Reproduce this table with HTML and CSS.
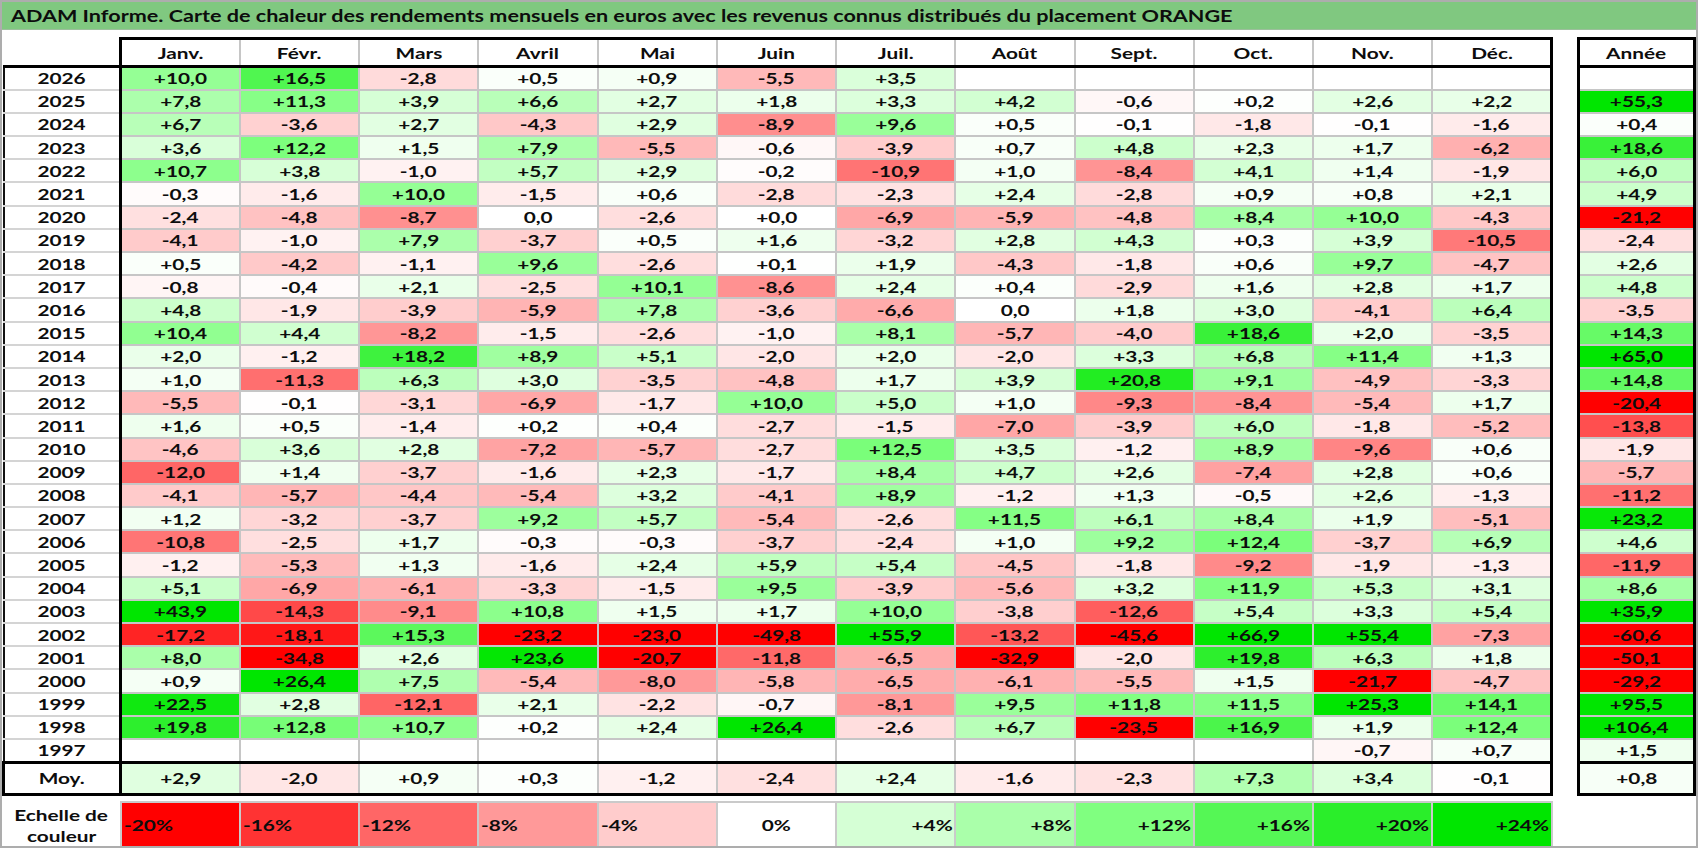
FILE: index.html
```html
<!DOCTYPE html>
<html lang="fr">
<head>
<meta charset="utf-8">
<title>ADAM Informe - Carte de chaleur ORANGE</title>
<link rel="stylesheet" href="styles.css">
</head>
<body>
<div class="page">
  <header class="title"><span class="sx-title">ADAM Informe. Carte de chaleur des rendements mensuels en euros avec les revenus connus distribués du placement ORANGE</span></header>
  <div class="sheet">
    <table class="grid" id="grid"></table>
    <table class="totals" id="totals"></table>
  </div>
</div>
<script src="script.js"></script>
</body>
</html>
```

FILE: styles.css
```css
* { box-sizing: border-box; }
html, body { margin: 0; padding: 0; background: #fff; }
body {
  font-family: Lato, "Open Sans", "Liberation Sans", sans-serif;
  font-weight: 700;
  color: #0d0d0d;
}
.page {
  width: 1698px;
  height: 848px;
  border: 2px solid #adadad;
  overflow: hidden;
}
.title {
  height: 28px;
  background: #80c880;
  border-bottom: 1px solid #9cbf9c;
  display: flex;
  align-items: center;
  padding-left: 9px;
  font-size: 17px;
  white-space: nowrap;
}
.sx-title { display: inline-block; transform: scaleX(1.27); transform-origin: left center; }
.sx { display: inline-block; transform: scaleX(1.3); }
.sx-left { transform-origin: left center; }
.sx-right { transform-origin: right center; }

.sheet {
  display: flex;
  justify-content: space-between;
  align-items: flex-start;
  margin-top: 7px;
}
table { border-collapse: collapse; table-layout: fixed; }
.grid { width: 1548px; }
.totals { width: 119px; }
col.c-year { width: 117px; }
col.c-m { width: 119.25px; }

th, td {
  padding: 0;
  text-align: center;
  font-size: 16px;
  font-weight: 700;
  white-space: nowrap;
  line-height: 18px;
}

/* header */
.hdr th {
  height: 28px;
  border-top: 3px solid #000;
  border-bottom: 3px solid #000;
  border-left: 2px solid #c6c6c6;
  border-right: 2px solid #c6c6c6;
}
.hdr th.corner { border-top: none; border-left: none; border-right: 3px solid #000; }
.hdr th:last-child { border-right: 3px solid #000; }
.totals .hdr th { border-left: 3px solid #000; border-right: 3px solid #000; }

/* year rows */
.yr td, .yr th { height: 23.2px; }
td.v { border: 2px solid #c6c6c6; }
th.lab {
  border-left: 2px solid #111;
  border-right: 3px solid #000;
  border-top: 2px solid #d4d4d4;
  border-bottom: 2px solid #d4d4d4;
}
.yr td:last-child, .avg td:last-child { border-right: 3px solid #000; }
.totals td.v { border-left: 3px solid #000; border-right: 3px solid #000; }

/* average row */
.avg td, .avg th { height: 32px; border-top: 3px solid #000; border-bottom: 3px solid #000; }
.avg th.lab { border-left: 3px solid #000; }

/* spacer + colour scale */
.gap td { height: 8px; border: none; }
.scale td, .scale th { height: 45px; }
.scale td { border: 2px solid #cacaca; }
.scale th.lab2 { border: none; line-height: 21px; }
.scale td.neg { text-align: left; padding-left: 2px; }
.scale td.pos { text-align: right; padding-right: 2px; }
```

FILE: script.js
```js
(function () {
  var months = ['Janv.', 'Févr.', 'Mars', 'Avril', 'Mai', 'Juin', 'Juil.', 'Août', 'Sept.', 'Oct.', 'Nov.', 'Déc.'];
  var data = [
    ['2026', '+10,0 +16,5 -2,8 +0,5 +0,9 -5,5 +3,5 . . . . .', '.'],
    ['2025', '+7,8 +11,3 +3,9 +6,6 +2,7 +1,8 +3,3 +4,2 -0,6 +0,2 +2,6 +2,2', '+55,3'],
    ['2024', '+6,7 -3,6 +2,7 -4,3 +2,9 -8,9 +9,6 +0,5 -0,1 -1,8 -0,1 -1,6', '+0,4'],
    ['2023', '+3,6 +12,2 +1,5 +7,9 -5,5 -0,6 -3,9 +0,7 +4,8 +2,3 +1,7 -6,2', '+18,6'],
    ['2022', '+10,7 +3,8 -1,0 +5,7 +2,9 -0,2 -10,9 +1,0 -8,4 +4,1 +1,4 -1,9', '+6,0'],
    ['2021', '-0,3 -1,6 +10,0 -1,5 +0,6 -2,8 -2,3 +2,4 -2,8 +0,9 +0,8 +2,1', '+4,9'],
    ['2020', '-2,4 -4,8 -8,7 0,0 -2,6 +0,0 -6,9 -5,9 -4,8 +8,4 +10,0 -4,3', '-21,2'],
    ['2019', '-4,1 -1,0 +7,9 -3,7 +0,5 +1,6 -3,2 +2,8 +4,3 +0,3 +3,9 -10,5', '-2,4'],
    ['2018', '+0,5 -4,2 -1,1 +9,6 -2,6 +0,1 +1,9 -4,3 -1,8 +0,6 +9,7 -4,7', '+2,6'],
    ['2017', '-0,8 -0,4 +2,1 -2,5 +10,1 -8,6 +2,4 +0,4 -2,9 +1,6 +2,8 +1,7', '+4,8'],
    ['2016', '+4,8 -1,9 -3,9 -5,9 +7,8 -3,6 -6,6 0,0 +1,8 +3,0 -4,1 +6,4', '-3,5'],
    ['2015', '+10,4 +4,4 -8,2 -1,5 -2,6 -1,0 +8,1 -5,7 -4,0 +18,6 +2,0 -3,5', '+14,3'],
    ['2014', '+2,0 -1,2 +18,2 +8,9 +5,1 -2,0 +2,0 -2,0 +3,3 +6,8 +11,4 +1,3', '+65,0'],
    ['2013', '+1,0 -11,3 +6,3 +3,0 -3,5 -4,8 +1,7 +3,9 +20,8 +9,1 -4,9 -3,3', '+14,8'],
    ['2012', '-5,5 -0,1 -3,1 -6,9 -1,7 +10,0 +5,0 +1,0 -9,3 -8,4 -5,4 +1,7', '-20,4'],
    ['2011', '+1,6 +0,5 -1,4 +0,2 +0,4 -2,7 -1,5 -7,0 -3,9 +6,0 -1,8 -5,2', '-13,8'],
    ['2010', '-4,6 +3,6 +2,8 -7,2 -5,7 -2,7 +12,5 +3,5 -1,2 +8,9 -9,6 +0,6', '-1,9'],
    ['2009', '-12,0 +1,4 -3,7 -1,6 +2,3 -1,7 +8,4 +4,7 +2,6 -7,4 +2,8 +0,6', '-5,7'],
    ['2008', '-4,1 -5,7 -4,4 -5,4 +3,2 -4,1 +8,9 -1,2 +1,3 -0,5 +2,6 -1,3', '-11,2'],
    ['2007', '+1,2 -3,2 -3,7 +9,2 +5,7 -5,4 -2,6 +11,5 +6,1 +8,4 +1,9 -5,1', '+23,2'],
    ['2006', '-10,8 -2,5 +1,7 -0,3 -0,3 -3,7 -2,4 +1,0 +9,2 +12,4 -3,7 +6,9', '+4,6'],
    ['2005', '-1,2 -5,3 +1,3 -1,6 +2,4 +5,9 +5,4 -4,5 -1,8 -9,2 -1,9 -1,3', '-11,9'],
    ['2004', '+5,1 -6,9 -6,1 -3,3 -1,5 +9,5 -3,9 -5,6 +3,2 +11,9 +5,3 +3,1', '+8,6'],
    ['2003', '+43,9 -14,3 -9,1 +10,8 +1,5 +1,7 +10,0 -3,8 -12,6 +5,4 +3,3 +5,4', '+35,9'],
    ['2002', '-17,2 -18,1 +15,3 -23,2 -23,0 -49,8 +55,9 -13,2 -45,6 +66,9 +55,4 -7,3', '-60,6'],
    ['2001', '+8,0 -34,8 +2,6 +23,6 -20,7 -11,8 -6,5 -32,9 -2,0 +19,8 +6,3 +1,8', '-50,1'],
    ['2000', '+0,9 +26,4 +7,5 -5,4 -8,0 -5,8 -6,5 -6,1 -5,5 +1,5 -21,7 -4,7', '-29,2'],
    ['1999', '+22,5 +2,8 -12,1 +2,1 -2,2 -0,7 -8,1 +9,5 +11,8 +11,5 +25,3 +14,1', '+95,5'],
    ['1998', '+19,8 +12,8 +10,7 +0,2 +2,4 +26,4 -2,6 +6,7 -23,5 +16,9 +1,9 +12,4', '+106,4'],
    ['1997', '. . . . . . . . . . -0,7 +0,7', '+1,5']
  ];
  var avg = ['+2,9 -2,0 +0,9 +0,3 -1,2 -2,4 +2,4 -1,6 -2,3 +7,3 +3,4 -0,1', '+0,8'];
  var scale = [-20, -16, -12, -8, -4, 0, 4, 8, 12, 16, 20, 24];

  function num(s) { return parseFloat(s.replace(',', '.')); }
  function color(v) {
    if (v >= 0) {
      var t = Math.min(v / 24, 1);
      var r = Math.round(255 * (1 - t));
      var g = v <= 12 ? 255 : Math.round(255 - 25 * Math.min((v - 12) / 12, 1));
      return 'rgb(' + r + ',' + g + ',' + r + ')';
    }
    var u = Math.min(-v / 20, 1);
    var gb = Math.round(255 * (1 - u));
    return 'rgb(255,' + gb + ',' + gb + ')';
  }
  function cell(s) {
    if (s === '.') return '<td class="v"></td>';
    return '<td class="v" style="background:' + color(num(s)) + '"><span class="sx">' + s + '</span></td>';
  }

  var g = '<colgroup><col class="c-year">';
  for (var i = 0; i < 12; i++) g += '<col class="c-m">';
  g += '</colgroup><thead><tr class="hdr"><th class="corner"></th>';
  months.forEach(function (m) { g += '<th><span class="sx">' + m + '</span></th>'; });
  g += '</tr></thead><tbody>';
  data.forEach(function (row) {
    g += '<tr class="yr"><th class="lab"><span class="sx">' + row[0] + '</span></th>';
    row[1].split(' ').forEach(function (s) { g += cell(s); });
    g += '</tr>';
  });
  g += '<tr class="avg"><th class="lab"><span class="sx">Moy.</span></th>';
  avg[0].split(' ').forEach(function (s) { g += cell(s); });
  g += '</tr>';
  g += '<tr class="gap"><td colspan="13"></td></tr>';
  g += '<tr class="scale"><th class="lab2"><span class="sx">Echelle de</span><br><span class="sx">couleur</span></th>';
  scale.forEach(function (v) {
    var label = (v > 0 ? '+' : '') + v + '%';
    var cls = v < 0 ? 'neg' : (v > 0 ? 'pos' : 'zero');
    var sc = v < 0 ? 'sx sx-left' : (v > 0 ? 'sx sx-right' : 'sx');
    g += '<td class="' + cls + '" style="background:' + color(v) + '"><span class="' + sc + '">' + label + '</span></td>';
  });
  g += '</tr></tbody>';
  document.getElementById('grid').innerHTML = g;

  var t = '<thead><tr class="hdr"><th><span class="sx">Année</span></th></tr></thead><tbody>';
  data.forEach(function (row) { t += '<tr class="yr">' + cell(row[2]) + '</tr>'; });
  t += '<tr class="avg">' + cell(avg[1]) + '</tr></tbody>';
  document.getElementById('totals').innerHTML = t;
})();
```
